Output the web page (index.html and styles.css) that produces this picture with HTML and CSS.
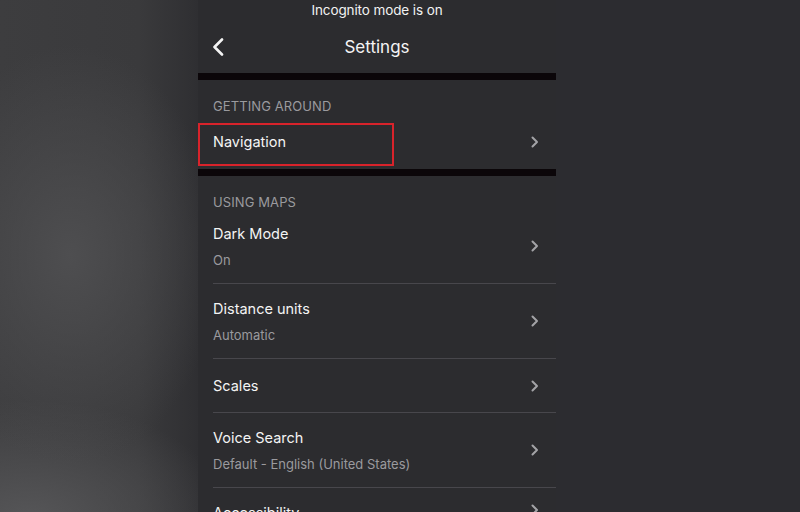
FILE: index.html
```html
<!DOCTYPE html>
<html lang="en">
<head>
<meta charset="utf-8">
<title>Settings</title>
<link rel="stylesheet" href="styles.css">
</head>
<body>
<div class="stage">
  <div class="side side-left"></div>
  <div class="phone">
    <div class="status">Incognito mode is on</div>
    <div class="header">
      <svg class="back" width="12" height="18" viewBox="0 0 12 18"><path d="M10 1.5 L2.5 9 L10 16.5" fill="none" stroke="#f4f4f4" stroke-width="2.6" stroke-linecap="round" stroke-linejoin="round"/></svg>
      <div class="title">Settings</div>
    </div>
    <div class="bar"></div>
    <div class="section">GETTING AROUND</div>
    <div class="row row-nav">
      <div class="texts"><div class="label">Navigation</div></div>
      <svg class="chev" width="8" height="12" viewBox="0 0 8 12"><path d="M1.5 1.5 L6 6 L1.5 10.5" fill="none" stroke="#a3a3a7" stroke-width="2" stroke-linecap="round" stroke-linejoin="round"/></svg>
      <div class="highlight"></div>
    </div>
    <div class="bar"></div>
    <div class="section">USING MAPS</div>
    <div class="row row-two">
      <div class="texts"><div class="label">Dark Mode</div><div class="sub">On</div></div>
      <svg class="chev" width="8" height="12" viewBox="0 0 8 12"><path d="M1.5 1.5 L6 6 L1.5 10.5" fill="none" stroke="#a3a3a7" stroke-width="2" stroke-linecap="round" stroke-linejoin="round"/></svg>
    </div>
    <div class="row row-two">
      <div class="texts"><div class="label">Distance units</div><div class="sub">Automatic</div></div>
      <svg class="chev" width="8" height="12" viewBox="0 0 8 12"><path d="M1.5 1.5 L6 6 L1.5 10.5" fill="none" stroke="#a3a3a7" stroke-width="2" stroke-linecap="round" stroke-linejoin="round"/></svg>
    </div>
    <div class="row row-one">
      <div class="texts"><div class="label">Scales</div></div>
      <svg class="chev" width="8" height="12" viewBox="0 0 8 12"><path d="M1.5 1.5 L6 6 L1.5 10.5" fill="none" stroke="#a3a3a7" stroke-width="2" stroke-linecap="round" stroke-linejoin="round"/></svg>
    </div>
    <div class="row row-two">
      <div class="texts"><div class="label">Voice Search</div><div class="sub">Default - English (United States)</div></div>
      <svg class="chev" width="8" height="12" viewBox="0 0 8 12"><path d="M1.5 1.5 L6 6 L1.5 10.5" fill="none" stroke="#a3a3a7" stroke-width="2" stroke-linecap="round" stroke-linejoin="round"/></svg>
    </div>
    <div class="row row-last">
      <div class="texts"><div class="label">Accessibility</div></div>
      <svg class="chev" width="8" height="12" viewBox="0 0 8 12"><path d="M1.5 1.5 L6 6 L1.5 10.5" fill="none" stroke="#a3a3a7" stroke-width="2" stroke-linecap="round" stroke-linejoin="round"/></svg>
    </div>
  </div>
  <div class="side side-right"></div>
</div>
</body>
</html>
```
FILE: styles.css
```css
* { box-sizing: border-box; }
html, body { margin: 0; padding: 0; }
body {
  width: 800px;
  height: 512px;
  overflow: hidden;
  background: #2c2c30;
  font-family: Inter, "Liberation Sans", sans-serif;
}
.stage {
  display: flex;
  width: 800px;
  height: 512px;
}
.side-left {
  width: 198px;
  flex: none;
  background:
    radial-gradient(ellipse 150px 210px at 70px 255px, rgba(78,78,80,1), rgba(78,78,80,0) 100%),
    radial-gradient(ellipse 200px 120px at 30px 520px, rgba(86,86,88,1), rgba(86,86,88,0) 100%),
    linear-gradient(90deg, #3d3d3f 0%, #3a3a3c 70%, #2f2f32 100%);
}
.side-right {
  flex: 1;
  background: #2c2c30;
}
.phone {
  width: 358px;
  flex: none;
  background: #2c2c2f;
  display: flex;
  flex-direction: column;
  overflow: hidden;
}
.phone > * { flex: none; }
.status {
  height: 22px;
  padding-top: 2px;
  text-align: center;
  color: #f2f2f2;
  font-size: 13.5px;
  line-height: 17px;
  letter-spacing: -0.1px;
}
.header {
  height: 51px;
  position: relative;
  display: flex;
  align-items: center;
  justify-content: center;
}
.back {
  position: absolute;
  left: 14px;
  top: 16px;
}
.title {
  color: #f4f4f4;
  font-size: 17px;
  padding-bottom: 2px;
}
.bar {
  height: 7px;
  background: #0b0609;
}
.section {
  height: 33px;
  padding: 18px 0 0 15px;
  color: #9a9a9e;
  font-size: 13px;
  line-height: 16px;
  letter-spacing: 0.1px;
}
.row {
  position: relative;
  display: flex;
  align-items: center;
  margin-left: 15px;
  padding-right: 17px;
  border-bottom: 1px solid #48474c;
}
.row-nav { height: 56px; border-bottom: none; padding-top: 2px; }
.row-two { height: 75px; }
.row-one { height: 54px; }
.row-last { height: 60px; align-items: flex-start; padding-top: 16px; }
.texts { flex: 1; }
.label {
  color: #f4f4f4;
  font-size: 14.5px;
  line-height: 18px;
}
.sub {
  color: #9a9a9e;
  font-size: 13px;
  line-height: 16px;
  margin-top: 9px;
}
.chev { flex: none; }
.highlight {
  position: absolute;
  left: -15px;
  top: 10px;
  width: 196px;
  height: 43px;
  border: 2.5px solid #d8232b;
}
```
